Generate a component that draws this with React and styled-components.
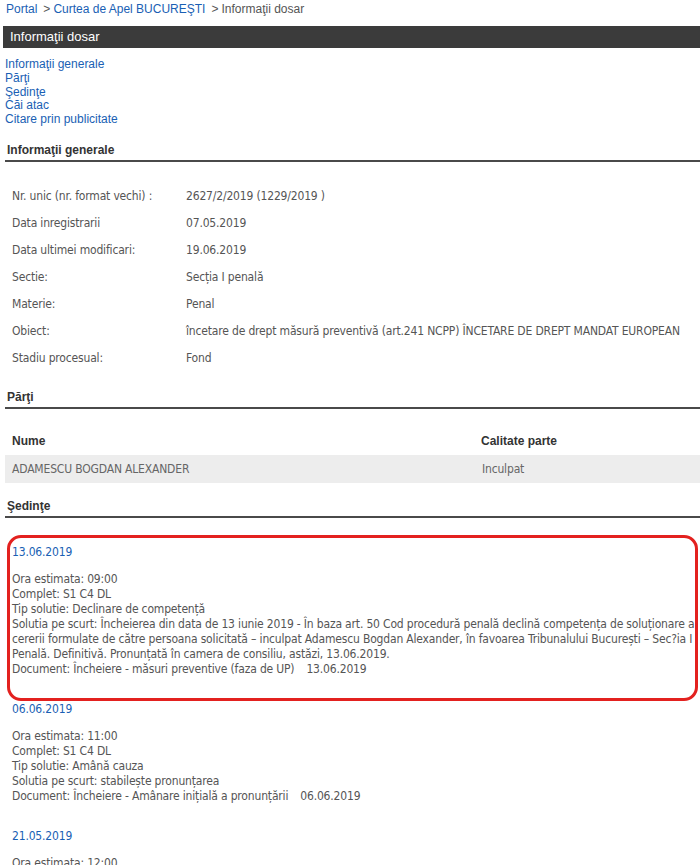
import React from 'react'
import styled, { createGlobalStyle } from 'styled-components'

const GlobalStyle = createGlobalStyle`
  html, body {
    margin: 0;
    padding: 0;
    overflow: hidden;
    background: #fff;
  }
  body {
    font-family: "Liberation Sans", Arial, sans-serif;
  }
`

const Page = styled.div`
  padding-left: 5px;
  width: 695px;
`

const Breadcrumb = styled.div`
  padding: 2px 0 0 1px;
  font-size: 12px;
  line-height: 14px;
  color: #555;
  white-space: nowrap;
`

const CrumbLink = styled.a`
  color: #1a5fb4;
  text-decoration: none;
`

const Sep = styled.span`
  margin: 0 3px 0 6px;
`

const TitleBar = styled.div`
  margin: 10px 0 0 -2px;
  height: 22px;
  line-height: 22px;
  padding-left: 7px;
  background: #3b3b3b;
  color: #fff;
  font-size: 13px;
`

const Nav = styled.nav`
  margin-top: 10px;
  display: flex;
  flex-direction: column;
`

const NavLink = styled.a`
  color: #1a5fb4;
  text-decoration: none;
  font-size: 12px;
  line-height: 13.8px;
`

const SectionTitle = styled.h3`
  margin: ${p => p.$gap}px 0 0;
  padding: 0 0 3px 2px;
  border-bottom: 2px solid #4a4a4a;
  font-size: 12px;
  line-height: 14px;
  font-weight: bold;
  color: #333;
`

const InfoGrid = styled.div`
  margin-top: 21px;
  display: grid;
  grid-template-columns: 181px 1fr;
  grid-auto-rows: 27px;
  align-items: center;
  font-family: "DejaVu Sans Condensed", "DejaVu Sans", sans-serif;
  font-size: 12px;
  letter-spacing: -0.17px;
  color: #555;
  white-space: nowrap;
`

const Label = styled.div`
  padding-left: 7px;
`

const Value = styled.div``

const PartiTable = styled.div`
  margin-top: 18px;
  display: grid;
  grid-template-columns: 469px 1fr;
  grid-auto-rows: 28px;
  align-items: center;
`

const HeadCell = styled.div`
  padding-left: 7px;
  font-size: 12px;
  font-weight: bold;
  color: #333;
`

const Cell = styled.div`
  height: 100%;
  display: flex;
  align-items: center;
  padding-left: ${p => p.$pad}px;
  background: #ededed;
  font-family: "DejaVu Sans Condensed", "DejaVu Sans", sans-serif;
  font-size: 12px;
  letter-spacing: -0.17px;
  color: #666;
`

const Sessions = styled.div`
  margin-top: 27px;
  font-family: "DejaVu Sans Condensed", "DejaVu Sans", sans-serif;
  font-size: 12px;
  letter-spacing: -0.17px;
  line-height: 15px;
  color: #555;
`

// the red outline marks the highlighted hearing, drawn over the content
const Session = styled.div`
  position: relative;
  padding-left: 7px;
  margin-bottom: 25px;

  ${p => p.$highlight && `
    &::before {
      content: "";
      position: absolute;
      top: -10px;
      left: 2px;
      right: 2px;
      bottom: -24px;
      border: 3px solid #e3211f;
      border-radius: 14px;
      pointer-events: none;
    }
  `}
`

const SessionDate = styled.a`
  display: block;
  color: #1a5fb4;
  text-decoration: none;
  margin-bottom: 12px;
`

const Lines = styled.div`
  white-space: nowrap;
`

const DocDate = styled.span`
  margin-left: 12px;
`

const info = [
  ['Nr. unic (nr. format vechi) :', '2627/2/2019 (1229/2019 )'],
  ['Data inregistrarii', '07.05.2019'],
  ['Data ultimei modificari:', '19.06.2019'],
  ['Sectie:', 'Secția I penală'],
  ['Materie:', 'Penal'],
  ['Obiect:', 'încetare de drept măsură preventivă (art.241 NCPP) ÎNCETARE DE DREPT MANDAT EUROPEAN'],
  ['Stadiu procesual:', 'Fond'],
]

const sessions = [
  {
    date: '13.06.2019',
    highlight: true,
    lines: [
      'Ora estimata: 09:00',
      'Complet: S1 C4 DL',
      'Tip solutie: Declinare de competență',
      'Solutia pe scurt: Încheierea din data de 13 iunie 2019 - În baza art. 50 Cod procedură penală declină competența de soluționare a',
      'cererii formulate de către persoana solicitată – inculpat Adamescu Bogdan Alexander, în favoarea Tribunalului București – Sec?ia I',
      'Penală. Definitivă. Pronunțată în camera de consiliu, astăzi, 13.06.2019.',
    ],
    doc: 'Document: Încheiere - măsuri preventive (faza de UP)',
  },
  {
    date: '06.06.2019',
    lines: [
      'Ora estimata: 11:00',
      'Complet: S1 C4 DL',
      'Tip solutie: Amână cauza',
      'Solutia pe scurt: stabilește pronunțarea',
    ],
    doc: 'Document: Încheiere - Amânare inițială a pronunțării',
  },
  {
    date: '21.05.2019',
    lines: [
      'Ora estimata: 12:00',
    ],
  },
]

export default function App() {
  return (
    <>
      <GlobalStyle />
      <Page>
        <Breadcrumb>
          <CrumbLink href="#">Portal</CrumbLink>
          <Sep>&gt;</Sep>
          <CrumbLink href="#">Curtea de Apel BUCUREŞTI</CrumbLink>
          <Sep>&gt;</Sep>
          Informaţii dosar
        </Breadcrumb>

        <TitleBar>Informaţii dosar</TitleBar>

        <Nav>
          <NavLink href="#">Informaţii generale</NavLink>
          <NavLink href="#">Părţi</NavLink>
          <NavLink href="#">Şedinţe</NavLink>
          <NavLink href="#">Căi atac</NavLink>
          <NavLink href="#">Citare prin publicitate</NavLink>
        </Nav>

        <SectionTitle $gap={16}>Informaţii generale</SectionTitle>
        <InfoGrid>
          {info.map(([k, v]) => (
            <React.Fragment key={k}>
              <Label>{k}</Label>
              <Value>{v}</Value>
            </React.Fragment>
          ))}
        </InfoGrid>

        <SectionTitle $gap={18}>Părţi</SectionTitle>
        <PartiTable>
          <HeadCell>Nume</HeadCell>
          <HeadCell>Calitate parte</HeadCell>
          <Cell $pad={7}>ADAMESCU BOGDAN ALEXANDER</Cell>
          <Cell $pad={8}>Inculpat</Cell>
        </PartiTable>

        <SectionTitle $gap={16}>Şedinţe</SectionTitle>
        <Sessions>
          {sessions.map(s => (
            <Session key={s.date} $highlight={s.highlight}>
              <SessionDate href="#">{s.date}</SessionDate>
              <Lines>
                {s.lines.map((l, i) => <div key={i}>{l}</div>)}
                {s.doc && (
                  <div>{s.doc}<DocDate>{s.date}</DocDate></div>
                )}
              </Lines>
            </Session>
          ))}
        </Sessions>
      </Page>
    </>
  )
}
